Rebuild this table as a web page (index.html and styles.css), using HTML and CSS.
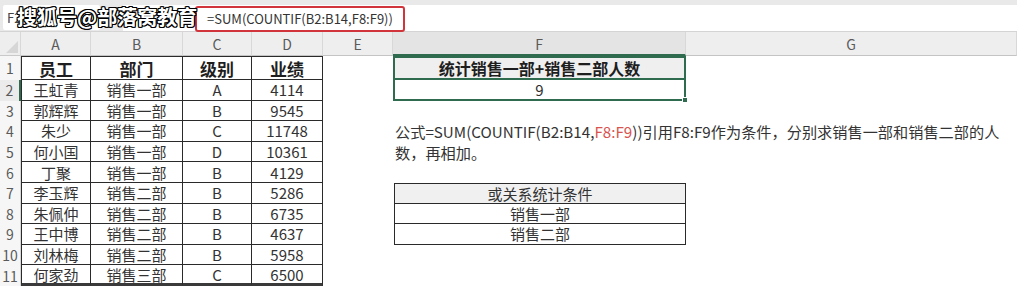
FILE: index.html
```html
<!DOCTYPE html>
<html lang="zh-CN">
<head>
<meta charset="utf-8">
<title>COUNTIF 或关系统计</title>
<link rel="stylesheet" href="styles.css">
</head>
<body>
<div class="app">
  <div class="fbar">
    <div class="namebox">F2</div>
    <div class="finput"><span class="formula">=SUM(COUNTIF(B2:B14,F8:F9))</span></div>
    <div class="watermark">搜狐号@部落窝教育</div>
  </div>
  <div class="sheet">
    <div class="corner"><svg width="12" height="12" viewBox="0 0 12 12"><path d="M12 0 L12 12 L0 12 Z" fill="#d6d6d6"/></svg></div>
    <div class="ch">A</div><div class="ch">B</div><div class="ch">C</div><div class="ch">D</div><div class="ch">E</div><div class="ch sel">F</div><div class="ch">G</div>

    <div class="rh">1</div><div class="t top left hd">员工</div><div class="t top hd">部门</div><div class="t top hd">级别</div><div class="t top hd">业绩</div><div class="c"></div><div class="c f1">统计销售一部+销售二部人数</div><div class="c"></div>

    <div class="rh selrow">2</div><div class="t left">王虹青</div><div class="t">销售一部</div><div class="t">A</div><div class="t">4114</div><div class="c"></div><div class="c f2">9<span class="handle"></span></div><div class="c"></div>

    <div class="rh">3</div><div class="t left">郭辉辉</div><div class="t">销售一部</div><div class="t">B</div><div class="t">9545</div><div class="c"></div><div class="c"></div><div class="c"></div>

    <div class="rh">4</div><div class="t left">朱少</div><div class="t">销售一部</div><div class="t">C</div><div class="t">11748</div><div class="c"></div>
    <div class="note">公式=SUM(COUNTIF(B2:B14,<span class="red">F8:F9</span>))引用F8:F9作为条件，分别求销售一部和销售二部的人<br>数，再相加。</div>

    <div class="rh">5</div><div class="t left">何小国</div><div class="t">销售一部</div><div class="t">D</div><div class="t">10361</div><div class="c"></div>

    <div class="rh">6</div><div class="t left">丁聚</div><div class="t">销售一部</div><div class="t">B</div><div class="t">4129</div><div class="c"></div><div class="c"></div><div class="c"></div>

    <div class="rh">7</div><div class="t left">李玉辉</div><div class="t">销售二部</div><div class="t">B</div><div class="t">5286</div><div class="c"></div><div class="c crit crit-top shade">或关系统计条件</div><div class="c"></div>

    <div class="rh">8</div><div class="t left">朱佩仲</div><div class="t">销售二部</div><div class="t">B</div><div class="t">6735</div><div class="c"></div><div class="c crit">销售一部</div><div class="c"></div>

    <div class="rh">9</div><div class="t left">王中博</div><div class="t">销售二部</div><div class="t">B</div><div class="t">4637</div><div class="c"></div><div class="c crit">销售二部</div><div class="c"></div>

    <div class="rh">10</div><div class="t left">刘林梅</div><div class="t">销售二部</div><div class="t">B</div><div class="t">5958</div><div class="c"></div><div class="c"></div><div class="c"></div>

    <div class="rh">11</div><div class="t left last">何家劲</div><div class="t last">销售三部</div><div class="t last">C</div><div class="t last">6500</div><div class="c"></div><div class="c"></div><div class="c"></div>
  </div>
</div>
</body>
</html>
```

FILE: styles.css
```css
* { box-sizing: border-box; }
html, body { margin: 0; padding: 0; background: #ffffff; }
body {
  font-family: "Noto Sans CJK SC", "Noto Sans", sans-serif;
  color: #2e2e2e;
  width: 1017px;
  height: 288px;
  overflow: hidden;
}
.app { width: 1017px; }

/* formula bar */
.fbar {
  position: relative;
  height: 32px;
  background: #e9e9e9;
  display: flex;
  align-items: flex-start;
  padding: 5px 0 0 3px;
  gap: 23px;
  border-bottom: 1px solid #d4d4d4;
}
.namebox {
  width: 97px;
  height: 25px;
  background: #ffffff;
  font-size: 13px;
  line-height: 25px;
  padding-left: 4px;
  color: #444;
  border-radius: 2px;
}
.finput {
  flex: 1;
  height: 26px;
  background: #ffffff;
  padding-left: 72px;
}
.formula {
  display: inline-block;
  height: 26px;
  border: 2px solid #d1343a;
  border-radius: 3px;
  font-size: 13px;
  line-height: 22px;
  padding: 0 10px;
  color: #333;
}
.watermark {
  position: absolute;
  left: 17px;
  top: 4px;
  font-size: 20px;
  font-weight: 700;
  line-height: 26px;
  color: #ffffff;
  text-shadow:
    1px 0 0 #000, -1px 0 0 #000, 0 1px 0 #000, 0 -1px 0 #000,
    1px 1px 0 #000, -1px -1px 0 #000, 1px -1px 0 #000, -1px 1px 0 #000;
}

/* sheet grid */
.sheet {
  display: grid;
  grid-template-columns: 21px 70px 92px 69px 71px 70px 293px 1fr;
  grid-template-rows: 24px 24px repeat(10, 20.6px);
  font-size: 15px;
}
.corner {
  background: #eeeeee;
  border-bottom: 1px solid #c9c9c9;
  border-right: 1px solid #d8d8d8;
  display: flex;
  align-items: flex-end;
  justify-content: flex-end;
  padding: 0 2px 2px 0;
}
.ch {
  background: #eeeeee;
  border-bottom: 1px solid #c4c4c4;
  border-right: 1px solid #d8d8d8;
  color: #5a5a5a;
  font-size: 14px;
  text-align: center;
  line-height: 24px;
}
.ch.sel { border-bottom: 2px solid #2f6b4f; background: #e4e4e4; }
.rh {
  grid-column: 1;
  background: #f6f6f6;
  color: #5a5a5a;
  font-size: 14px;
  text-align: center;
  display: flex;
  align-items: center;
  justify-content: center;
  border-right: 1px solid #d8d8d8;
}
.rh.selrow { border-right: 2px solid #2f6b4f; background: #ebebeb; }
.c { display: flex; align-items: center; justify-content: center; }
.t {
  display: flex;
  align-items: center;
  justify-content: center;
  border-right: 1px solid #2a2a2a;
  border-bottom: 1px solid #2a2a2a;
  color: #333;
}
.t.left { border-left: 1px solid #2a2a2a; }
.t.top { border-top: 1px solid #2a2a2a; }
.t.last { border-bottom: 3px solid #3a3a3a; }
.t.hd { font-weight: 700; font-size: 17px; color: #1e1e1e; }

.f1 {
  border: 2px solid #2f6b4f;
  background: #efefef;
  font-weight: 700;
  font-size: 16px;
  color: #1e1e1e;
}
.f2 {
  position: relative;
  border: 2px solid #2f6b4f;
  border-top: none;
  font-size: 15px;
}
.handle {
  position: absolute;
  right: -4px;
  bottom: -4px;
  width: 6px;
  height: 6px;
  background: #2f6b4f;
  border: 1px solid #ffffff;
}

.note {
  grid-column: span 2;
  grid-row: span 2;
  font-size: 15.2px;
  line-height: 20.6px;
  padding-left: 2px;
  white-space: nowrap;
  color: #333;
}
.red { color: #d9534f; }

.crit {
  border-left: 1px solid #2a2a2a;
  border-right: 1px solid #2a2a2a;
  border-bottom: 1px solid #2a2a2a;
  color: #333;
  font-size: 15px;
  margin-left: 1px;
}
.crit-top { border-top: 1px solid #2a2a2a; }
.shade { background: #f0f0f0; }
```
